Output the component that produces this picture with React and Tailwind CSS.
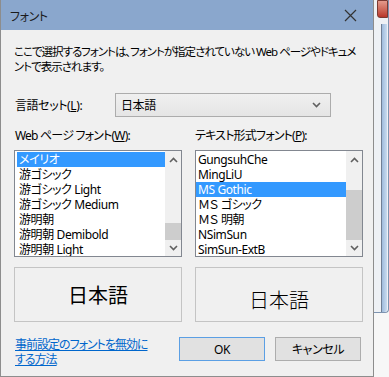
import React from "react";

const leftFonts = ["メイリオ", "游ゴシック", "游ゴシック Light", "游ゴシック Medium", "游明朝", "游明朝 Demibold", "游明朝 Light"]
const rightFonts = ["GungsuhChe", "MingLiU", "MS Gothic", "ＭＳ ゴシック", "ＭＳ 明朝", "NSimSun", "SimSun-ExtB"]

function Chevron({ up }) {
    return (
        <svg width="9" height="6" viewBox="0 0 9 6" className="block">
            <polyline points={up ? "1,5 4.5,1.5 8,5" : "1,1 4.5,4.5 8,1"} fill="none" stroke="#606060" strokeWidth="1.6" />
        </svg>
    )
}

function ListBox({ items, selected, thumbTop, thumbHeight, textX }) {
    return (
        <div className="flex h-[107px] w-[168px] border border-[#828790] bg-white overflow-hidden">
            <div className="flex-1 pt-px" style={{ paddingLeft: textX }}>
                {items.map((item, i) => (
                    <div key={item}
                        className={`h-[15px] leading-[15px] -ml-[2px] pl-[2px] whitespace-nowrap overflow-hidden ${i === selected ? "bg-[#3399ff] text-white" : "text-black"}`}>
                        {item}
                    </div>
                ))}
            </div>
            <div className="relative w-[16px] bg-[#f0f0f0]">
                <div className="flex h-[17px] items-center justify-center"><Chevron up /></div>
                <div className="absolute left-0 w-[16px] bg-[#cdcdcd]" style={{ top: thumbTop, height: thumbHeight }} />
                <div className="absolute bottom-0 flex h-[17px] w-[16px] items-center justify-center"><Chevron /></div>
            </div>
        </div>
    )
}

function App() {
    return (
        <div className="flex w-[389px] h-[377px] overflow-hidden bg-[#f7f7f7] text-[12px] leading-[15px] tracking-[-0.4px] text-black [font-feature-settings:'palt']" style={{ fontFamily: '"Noto Sans", "Noto Sans CJK JP", sans-serif' }}>
            <div className="flex flex-col w-[374px] shrink-0 h-[377px] border-r border-b border-l border-[#8d8d8d] bg-[#f0f0f0]">
                <div className="flex items-center justify-between h-[30px] shrink-0 bg-[#8aa7cd] pl-[9px] pr-[16px]">
                    <span className="text-[12px] text-[#1b1b1b]" style={{ fontFamily: '"Noto Sans CJK JP", sans-serif' }}>フォント</span>
                    <svg width="13" height="13" viewBox="0 0 13 13">
                        <path d="M1 1 L12 12 M12 1 L1 12" stroke="#333" strokeWidth="1.2" />
                    </svg>
                </div>

                <div className="flex flex-col pl-[12px] pt-[14px]">
                    <div className="h-[30px] pl-[1px] whitespace-nowrap text-[11.5px] tracking-[-1px]">
                        ここで選択するフォントは、フォントが指定されていない Web ページやドキュメ<br />ントで表示されます。
                    </div>

                    <div className="flex items-center mt-[19px] h-[24px]">
                        <span className="w-[102px] pl-[2px]">言語セット(<u>L</u>):</span>
                        <div className="flex items-center justify-between w-[216px] h-[24px] border border-[#acacac] bg-gradient-to-b from-[#f0f0f0] to-[#e5e5e5] pl-[5px] pr-[9px]">
                            <span>日本語</span>
                            <Chevron />
                        </div>
                    </div>

                    <div className="flex h-[15px] mt-[11px] tracking-[-0.8px]">
                        <span className="w-[182px] pl-[2px]">Web ページ フォント(<u>W</u>):</span>
                        <span>テキスト形式フォント(<u>P</u>):</span>
                    </div>

                    <div className="flex gap-[13px] mt-[7px] pl-px">
                        <ListBox items={leftFonts} selected={0} thumbTop={72} thumbHeight={17} textX={4} />
                        <ListBox items={rightFonts} selected={2} thumbTop={39} thumbHeight={50} textX={2} />
                    </div>

                    <div className="flex gap-[13px] mt-[10px] pl-px tracking-normal">
                        <div className="flex items-center justify-center w-[168px] h-[55px] border border-[#c4c4c4] text-[20px] leading-[24px]" style={{ fontFamily: '"Noto Sans CJK JP", sans-serif' }}>
                            日本語
                        </div>
                        <div className="flex items-center justify-center w-[168px] h-[55px] border border-[#c4c4c4] pt-[10px] text-[20px] leading-[24px] font-light" style={{ fontFamily: '"Noto Sans CJK JP", sans-serif' }}>
                            日本語
                        </div>
                    </div>

                    <div className="flex mt-[15px] pl-[2px]">
                        <a className="w-[164px] h-[30px] text-[#0066cc] underline whitespace-nowrap tracking-[-1px]">
                            事前設定のフォントを無効に<br />する方法
                        </a>
                        <div className="flex gap-[10px]">
                            <button className="w-[86px] h-[24px] border border-[#5b9fe4] bg-[#e1e1e1]">OK</button>
                            <button className="w-[86px] h-[24px] border border-[#adadad] bg-[#e1e1e1]">キャンセル</button>
                        </div>
                    </div>
                </div>
            </div>

            {/* window behind the dialog */}
            <div className="flex-1">
                <div className="relative h-[313px] rounded-br-[4px] border-r border-b border-[#7d93b0] bg-[#eef1f5]">
                    <div className="ml-[3px] h-[18px] border border-[#7a3a33] bg-gradient-to-b from-[#e39a8c] to-[#b8352a] rounded-bl-[3px]" />
                    <div className="absolute left-[7px] top-[24px] bottom-0 w-[6px] border-l border-[#6f7f95] bg-gradient-to-r from-[#9fbbdc] to-[#c9dcf0] rounded-br-[3px]" />
                </div>
            </div>
        </div>
    )
}

export default App
